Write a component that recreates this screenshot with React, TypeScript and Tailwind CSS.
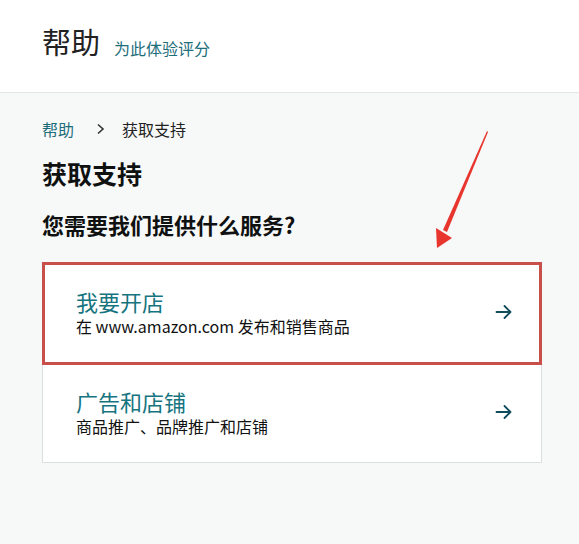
import React from 'react';

const font = { fontFamily: '"Noto Sans CJK SC", "Noto Sans", sans-serif' };

function ArrowRight() {
  return (
    <svg width="20" height="20" viewBox="0 0 20 20" fill="none" stroke="#0f4c5c" strokeWidth="1.8" strokeLinecap="round" strokeLinejoin="round">
      <path d="M2.5 10h14M10.5 4L16.5 10l-6 6" />
    </svg>
  );
}

function Option({ title, desc, highlight }: { title: string; desc: string; highlight?: boolean }) {
  return (
    <div
      className={
        highlight
          ? 'flex items-center justify-between bg-white border-[3px] border-[#c8504b] h-[103px] pl-[31px] pr-[25px] pb-[4px]'
          : 'flex items-center justify-between bg-white border border-t-0 border-[#dcdfdf] h-[98px] pl-[33px] pr-[27px] pb-[4px]'
      }
    >
      <div className="flex flex-col">
        <span className="text-[22px] leading-[28px] text-[#167480]">{title}</span>
        <span className="text-[16px] leading-[22px] text-[#111]">{desc}</span>
      </div>
      <ArrowRight />
    </div>
  );
}

export default function App() {
  return (
    <div className="relative w-[579px] h-[544px] bg-[#f7f8f8] overflow-hidden" style={font}>
      <header className="h-[93px] bg-white border-b border-[#e3e6e6] flex items-center pl-[42px] gap-[14px] pb-[9px]">
        <span className="text-[29px] text-[#222] leading-none">帮助</span>
        <span className="text-[16px] leading-[22px] text-[#1d6e7a] mt-[13px]">为此体验评分</span>
      </header>

      <div className="px-[42px] pt-[25px]">
        <div className="flex items-center text-[16px] leading-[22px]">
          <span className="text-[#1d6e7a]">帮助</span>
          <span className="ml-[22px] mr-[17px] text-[#333]">
            <svg width="9" height="12" viewBox="0 0 9 12" fill="none" stroke="#333" strokeWidth="1.6">
              <path d="M2 1.5L7 6l-5 4.5" />
            </svg>
          </span>
          <span className="text-[#222]">获取支持</span>
        </div>
        <h1 className="mt-[17px] text-[25px] leading-[32px] font-bold text-[#0f1111]">获取支持</h1>
        <h2 className="mt-[20px] text-[22px] leading-[30px] font-bold text-[#0f1111]">您需要我们提供什么服务?</h2>

        <div className="mt-[23px] w-[500px]">
          <Option title="我要开店" desc="在 www.amazon.com 发布和销售商品" highlight />
          <Option title="广告和店铺" desc="商品推广、品牌推广和店铺" />
        </div>
      </div>

      <svg className="absolute left-0 top-0" width="579" height="544" viewBox="0 0 579 544">
        <polygon points="487,131 488,132 447,232 443,230" fill="#e8352e" />
        <polygon points="437,248 436,228 452,238" fill="#e8352e" />
      </svg>
    </div>
  );
}
